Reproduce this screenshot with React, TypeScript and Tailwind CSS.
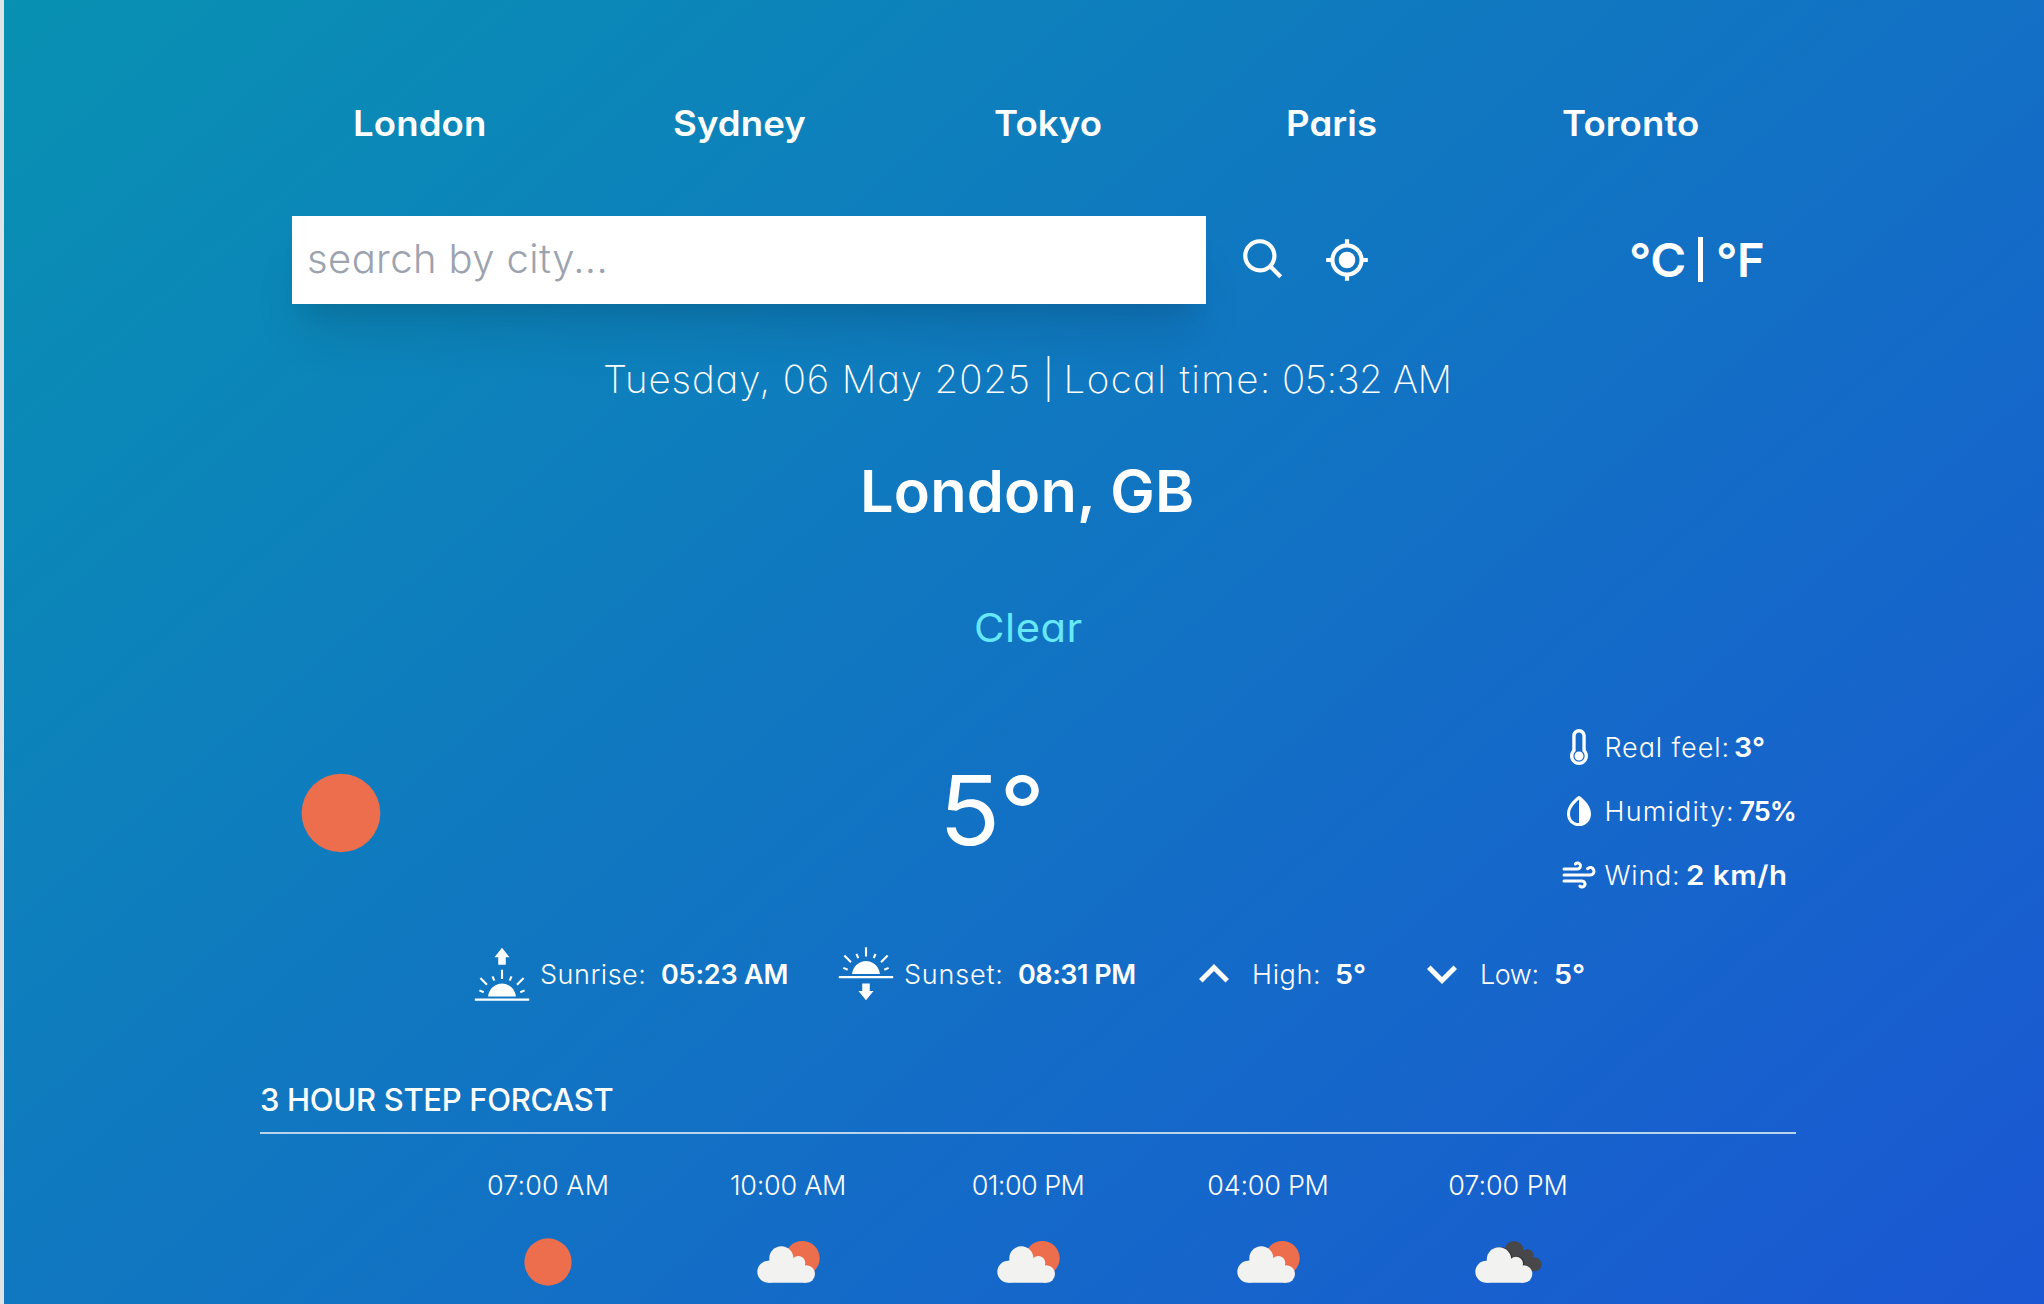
import React from "react";
import { BiCurrentLocation, BiSearch, BiSolidDropletHalf } from "react-icons/bi";
import { FaThermometerEmpty } from "react-icons/fa";
import { FiWind } from "react-icons/fi";
import { GiSunrise, GiSunset } from "react-icons/gi";
import { MdKeyboardArrowDown, MdKeyboardArrowUp } from "react-icons/md";

const cities = [
  { name: "London", cls: "w-[320px]" },
  { name: "Sydney", cls: "w-[321px]" },
  { name: "Tokyo", cls: "w-[292px]" },
  { name: "Paris", cls: "w-[276px]" },
  { name: "Toronto", cls: "" },
];

const hours = [
  { time: "07:00 AM", icon: "sun", cls: "tracking-[0.08px]" },
  { time: "10:00 AM", icon: "few", cls: "tracking-[-0.28px]" },
  { time: "01:00 PM", icon: "few", cls: "tracking-[-0.56px]" },
  { time: "04:00 PM", icon: "few", cls: "tracking-[-0.27px]" },
  { time: "07:00 PM", icon: "broken", cls: "tracking-[-0.08px]" },
];

function Sun({ className }: { className: string }) {
  return (
    <svg viewBox="0 0 80 80" className={className}>
      <circle cx="40" cy="40" r="39.4" fill="#ec6e4c" />
    </svg>
  );
}

function FewClouds() {
  return (
    <svg viewBox="180 162 288 288" className="size-24">
      <circle cx="367" cy="295" r="52" fill="#ec6e4c" />
      <g fill="#f2f2f1">
        <circle cx="304" cy="295" r="36" />
        <circle cx="355" cy="309" r="21" />
        <circle cx="265" cy="335.5" r="33" />
        <circle cx="379" cy="342" r="26" />
        <path d="M265 302 L304 290 L355 300 L379 320 V368 H265Z" />
      </g>
    </svg>
  );
}

function BrokenClouds() {
  return (
    <svg viewBox="900 162 288 288" className="size-24">
      <g fill="#48484a">
        <circle cx="1062" cy="272" r="29" />
        <circle cx="1103" cy="286" r="18" />
        <circle cx="1124" cy="313" r="21" />
        <path d="M1062 272 L1103 286 L1124 313 L1118 333 L1080 330Z" />
      </g>
      <g fill="#2f3036">
        <circle cx="1020" cy="298" r="37" />
        <circle cx="1070" cy="311" r="22.5" />
      </g>
      <g fill="#f2f2f1">
        <circle cx="1017" cy="298" r="36.5" />
        <circle cx="1068" cy="311" r="21" />
        <circle cx="979" cy="335.5" r="33" />
        <circle cx="1091" cy="342" r="26" />
        <path d="M979 302 L1017 290 L1068 302 L1091 320 V368 H979Z" />
      </g>
    </svg>
  );
}

export default function App() {
  return (
    <div className="flex h-[1304px] w-[2044px] overflow-hidden bg-[#dfe3e6] pl-1 font-['Inter',sans-serif] text-white [font-feature-settings:'cv11']">
      <div className="h-[1750px] w-[2044px] shrink-0 bg-[linear-gradient(to_bottom_right,#0891b2,#1d4ed8)] px-64 pt-[95px]">
        <div className="w-[1536px]">
          <nav className="flex h-14 items-center pl-[93px] text-[35px] leading-none font-semibold">
            {cities.map((c) => (
              <button key={c.name} className={`text-left ${c.cls}`}>
                <span className="inline-block origin-left scale-x-[1.045] tracking-[0.1px]">{c.name}</span>
              </button>
            ))}
          </nav>

          <div className="mt-[65px] flex h-[88px] items-center pl-8">
            <input
              type="text"
              placeholder="search by city..."
              className="h-full w-[914px] bg-white pb-[3px] pl-[15px] text-[40px] font-light tracking-[0.4px] text-gray-700 shadow-[0_40px_50px_-10px_rgba(0,0,0,0.1),0_16px_20px_-12px_rgba(0,0,0,0.1)] outline-none placeholder:text-[#9ca3af]"
            />
            <BiSearch size={50} className="ml-[33px]" />
            <BiCurrentLocation size={50} className="ml-[33px]" />
            <div className="ml-[257px] flex items-center pb-[2px] text-[47px] leading-none font-semibold">
              <span className="w-[69px] origin-left scale-x-[1.04] tracking-[-0.5px]">°C</span>
              <span className="mt-[1px] h-[45px] w-[5px] bg-white" />
              <span className="ml-[13px] origin-left tracking-[-0.5px]">°F</span>
            </div>
          </div>

          <p className="mt-[45px] flex h-[60px] items-center pl-[343px] text-[38.5px] leading-none font-extralight whitespace-pre">
            <span className="tracking-[0.86px]">Tuesday, 06 May 2025 </span>
            <span className="tracking-[-0.6px]">| </span>
            <span className="tracking-[1.4px]">Local time: </span>
            <span className="-ml-[2px] tracking-[-0.5px]">05:32 AM</span>
          </p>
          <h1 className="mt-[37px] flex h-[90px] items-center pl-[600px] text-[58px] leading-none font-semibold whitespace-pre">
            <span className="origin-left scale-x-[1.025] tracking-[0.2px]">London, GB</span>
          </h1>
          <p className="mt-[61px] flex h-[60px] items-center pl-[714px] text-[39px] leading-none text-[#67e8f9]">
            <span className="origin-left scale-x-[1.07] tracking-[0.5px]">Clear</span>
          </p>

          <div className="mt-[58px] flex h-48 items-center">
            <Sun className="mt-[3px] ml-[41px] size-20" />
            <p className="ml-[558px] w-[623px] origin-left pb-[2px] text-[96px] leading-none">
              <span className="inline-block origin-left scale-x-[1.05] tracking-[-1px]">5°</span>
            </p>
            <div className="text-[27px] leading-none font-light whitespace-pre">
              <div className="flex h-16 items-center">
                <FaThermometerEmpty size={36} />
                <span className="ml-[7px] w-[130px] tracking-[0.91px]">Real feel:</span>
                <span className="origin-left scale-x-[1.06] font-semibold">3°</span>
              </div>
              <div className="flex h-16 items-center">
                <BiSolidDropletHalf size={36} />
                <span className="ml-[7px] w-[135px] tracking-[1.22px]">Humidity:</span>
                <span className="font-semibold tracking-[-0.94px]">75%</span>
              </div>
              <div className="flex h-16 items-center">
                <FiWind size={36} />
                <span className="ml-[7px] w-[82px] tracking-[0.79px]">Wind:</span>
                <span className="origin-left scale-x-[1.09] font-semibold tracking-[0.5px]">2 km/h</span>
              </div>
            </div>
          </div>

          <div className="mt-[37px] flex h-[60px] items-center pl-[212px] text-[27px] leading-none font-light whitespace-pre">
            <GiSunrise size={60} />
            <span className="ml-2 w-[121px] tracking-[0.51px]">Sunrise:</span>
            <span className="w-[175px] font-semibold tracking-[-0.2px]">05:23 AM</span>
            <GiSunset size={60} />
            <span className="ml-2 w-[114px] tracking-[0.8px]">Sunset:</span>
            <span className="w-[166px] font-semibold tracking-[-0.47px]">08:31 PM</span>
            <MdKeyboardArrowUp size={60} />
            <span className="ml-2 w-[83px] tracking-[0.64px]">High:</span>
            <span className="w-[77px] font-semibold">
              <span className="inline-block origin-left scale-x-[1.06]">5°</span>
            </span>
            <MdKeyboardArrowDown size={60} />
            <span className="ml-2 w-[74px] tracking-[-0.46px]">Low:</span>
            <span className="origin-left scale-x-[1.06] font-semibold">5°</span>
          </div>

          <h2 className="mt-[73px] flex h-11 items-center text-[31px] leading-none font-medium tracking-[-0.31px]">
            3 HOUR STEP FORCAST
          </h2>
          <hr className="mt-[11px] h-[2px] border-0 bg-[#b9d3ec]" />

          <div className="mt-[31px] flex pl-[168px]">
            {hours.map((h) => (
              <div key={h.time} className="flex w-60 flex-col items-center">
                <p className={`flex h-10 items-center text-[27px] leading-none font-light ${h.cls}`}>{h.time}</p>
                <div className="mt-[9px] flex size-24 items-center justify-center">
                  {h.icon === "sun" && <Sun className="size-12" />}
                  {h.icon === "few" && <FewClouds />}
                  {h.icon === "broken" && <BrokenClouds />}
                </div>
              </div>
            ))}
          </div>
        </div>
      </div>
    </div>
  );
}
